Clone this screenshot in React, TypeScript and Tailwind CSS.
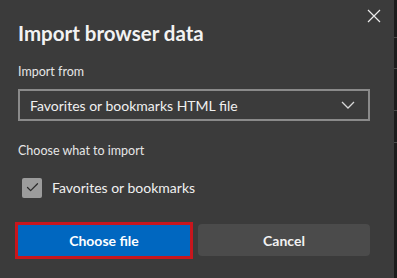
import { Check } from "lucide-react";

// Import browser data dialog (dark theme)

function CloseIcon() {
  return (
    <svg width="14" height="14" viewBox="0 0 14 14" fill="none" stroke="currentColor" strokeWidth="1.2">
      <path d="M1 1L13 13M13 1L1 13" />
    </svg>
  );
}

function Chevron() {
  return (
    <svg width="14" height="8" viewBox="0 0 14 8" fill="none" stroke="currentColor" strokeWidth="1.3">
      <path d="M1 1L7 7L13 1" />
    </svg>
  );
}

export default function App() {
  return (
    <div
      className="flex h-[278px] w-[397px] overflow-hidden bg-[#1e1e1e] text-white"
      style={{ fontFamily: 'Lato, "Noto Sans", sans-serif' }}
    >
      <div className="relative h-full w-[394px] shrink-0 bg-[#3b3b3b] pl-[18px] pr-[24px]">
        {/* Close */}
        <button className="absolute right-[13px] top-[9px] flex h-[14px] w-[14px] items-center justify-center text-[#ececec]">
          <CloseIcon />
        </button>

        {/* Header */}
        <h1 className="pt-[19px] text-[20.5px] font-bold leading-[28px] text-[#f2f2f2]">
          Import browser data
        </h1>

        {/* Import from */}
        <p className="mt-[16px] text-[12.5px] leading-[18px] text-[#e6e6e6]">Import from</p>
        <div className="mt-[8px] flex h-[32px] items-center justify-between border-2 border-[#8a8a8a] pl-[10px] pr-[13px]">
          <span className="text-[14px] text-[#f0f0f0]">Favorites or bookmarks HTML file</span>
          <span className="text-[#d8d8d8]">
            <Chevron />
          </span>
        </div>

        {/* What to import */}
        <p className="mt-[21px] text-[12.5px] leading-[18px] text-[#e6e6e6]">Choose what to import</p>
        <label className="mt-[17px] flex items-center gap-[10px] pl-[4px]">
          <span className="flex h-[20px] w-[20px] items-center justify-center rounded-[2px] bg-[#9c9c9c]">
            <Check size={15} strokeWidth={2} className="text-[#2b2b2b]" />
          </span>
          <span className="text-[14px] text-[#f0f0f0]">Favorites or bookmarks</span>
        </label>

        {/* Actions */}
        <div className="mt-[26px] grid grid-cols-2 items-center gap-[8px]">
          <button className="h-[31px] bg-[#0067c0] text-[14px] font-bold text-white outline-[3px] outline-solid outline-[#c8161d]">
            Choose file
          </button>
          <button className="h-[32px] rounded-[4px] bg-[#4b4b4b] text-[14px] font-bold text-[#f2f2f2]">
            Cancel
          </button>
        </div>
      </div>

      {/* Window edge */}
      <div className="flex flex-1 flex-col bg-[#1c1c1c] pt-[37px]">
        <div className="h-px bg-[#4a4a4a]" />
        <div className="mt-[30px] h-px bg-[#4a4a4a]" />
        <div className="mt-[41px] h-px bg-[#4a4a4a]" />
        <div className="mt-[31px] h-px bg-[#4a4a4a]" />
      </div>
    </div>
  );
}
